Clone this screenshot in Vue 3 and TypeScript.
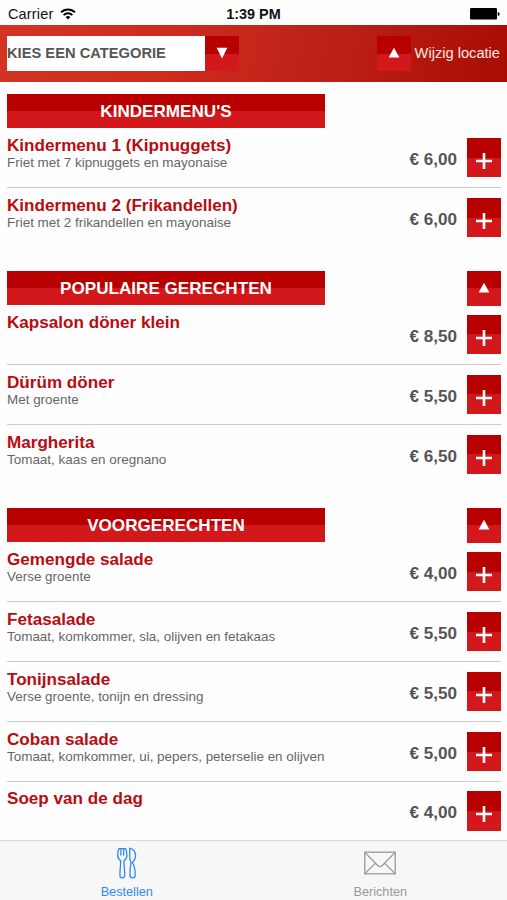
<script setup lang="ts">
interface Dish {
  name: string
  description: string
  price: string
}

interface Section {
  title: string
  collapsible: boolean
  dishes: Dish[]
}

const sections: Section[] = [
  {
    title: "KINDERMENU'S",
    collapsible: false,
    dishes: [
      { name: 'Kindermenu 1 (Kipnuggets)', description: 'Friet met 7 kipnuggets en mayonaise', price: '6,00' },
      { name: 'Kindermenu 2 (Frikandellen)', description: 'Friet met 2 frikandellen en mayonaise', price: '6,00' },
    ],
  },
  {
    title: 'POPULAIRE GERECHTEN',
    collapsible: true,
    dishes: [
      { name: 'Kapsalon döner klein', description: '', price: '8,50' },
      { name: 'Dürüm döner', description: 'Met groente', price: '5,50' },
      { name: 'Margherita', description: 'Tomaat, kaas en oregnano', price: '6,50' },
    ],
  },
  {
    title: 'VOORGERECHTEN',
    collapsible: true,
    dishes: [
      { name: 'Gemengde salade', description: 'Verse groente', price: '4,00' },
      { name: 'Fetasalade', description: 'Tomaat, komkommer, sla, olijven en fetakaas', price: '5,50' },
      { name: 'Tonijnsalade', description: 'Verse groente, tonijn en dressing', price: '5,50' },
      { name: 'Coban salade', description: 'Tomaat, komkommer, ui, pepers, peterselie en olijven', price: '5,00' },
      { name: 'Soep van de dag', description: '', price: '4,00' },
    ],
  },
]
</script>

<template>
  <div class="app">
    <div class="status">
      <div class="carrier">
        <span>Carrier</span>
        <svg class="wifi" width="16" height="12" viewBox="0 0 16 12" fill="none" stroke="#000" stroke-width="1.9">
          <path d="M1 4.4a10 10 0 0 1 14 0" />
          <path d="M3.6 7.1a6.3 6.3 0 0 1 8.8 0" />
          <path d="M8 11.6 5.6 9.1a3.5 3.5 0 0 1 4.8 0z" fill="#000" stroke="none" />
        </svg>
      </div>
      <div class="clock">1:39 PM</div>
      <div class="power">
        <svg width="30" height="12" viewBox="0 0 30 12">
          <rect x="0" y="0" width="27" height="11.5" rx="1.2" />
          <path d="M27.8 4v4c1.3-.4 1.8-1.1 1.8-2s-.5-1.6-1.8-2z" />
        </svg>
      </div>
    </div>

    <header class="toolbar">
      <div class="picker">
        <div class="field">KIES EEN CATEGORIE</div>
        <button class="square" aria-label="Open">
          <svg width="12" height="12" viewBox="0 0 12 12"><path d="M.6.8h10.8L6 11.6z" fill="#fff" /></svg>
        </button>
      </div>
      <div class="location">
        <button class="square" aria-label="Wijzig">
          <svg width="12" height="12" viewBox="0 0 12 12"><path d="M.6 10.6h10.8L6 .8z" fill="#fff" /></svg>
        </button>
        <span>Wijzig locatie</span>
      </div>
    </header>

    <main class="menu">
      <section v-for="section in sections" :key="section.title" class="section">
        <div class="section-head">
          <h2>{{ section.title }}</h2>
          <button v-if="section.collapsible" class="square" aria-label="Inklappen">
            <svg width="12" height="12" viewBox="0 0 12 12"><path d="M.6 10.6h10.8L6 .8z" fill="#fff" /></svg>
          </button>
        </div>
        <div v-for="dish in section.dishes" :key="dish.name" class="dish">
          <div class="info">
            <h3>{{ dish.name }}</h3>
            <p v-if="dish.description">{{ dish.description }}</p>
          </div>
          <div class="price">€ {{ dish.price }}</div>
          <button class="add" aria-label="Toevoegen">
            <svg width="16" height="16" viewBox="0 0 16 16"><path d="M8 0v16M0 8h16" stroke="#fff" stroke-width="2.6" /></svg>
          </button>
        </div>
      </section>
    </main>

    <nav class="tabs">
      <div class="tab active">
        <svg width="22" height="33" viewBox="0 0 22 33" fill="none" stroke="currentColor" stroke-width="1.3" stroke-linejoin="round" stroke-linecap="round">
          <path d="M3 1.6C2 3.500 1.700 6 1.700 8.500c0 3 1 4 2.900 5.100.3 4-.7 8.400-.7 14.400 0 1.800.9 2.900 2.400 2.900s2.400-1.100 2.400-2.900c0-6-1-10.400-.7-14.400 1.900-1.100 2.900-2.100 2.900-5.100 0-2.500-.3-5-1.300-6.900z" />
          <path d="M4.900 2v6M7.700 2v6" />
          <path d="M13.700 1.200c4 1 5.900 4.300 5.900 7.800 0 2.900-1.200 4.600-3.200 6.600 2 2.900 2.800 7.900 2.800 12.400 0 1.800-1 2.900-2.600 2.900s-2.700-1.100-2.700-2.900c0-4.500.2-8.500 1.200-12.400-1.200-2-1.400-4-1.400-6z" />
        </svg>
        <span>Bestellen</span>
      </div>
      <div class="tab">
        <svg width="32" height="33" viewBox="0 0 32 33" fill="none" stroke="currentColor" stroke-width="1.3">
          <rect x=".8" y="5.2" width="30.4" height="21.600" />
          <path d="M.8 5.4 14 18.800q2 1.700 4 0L31.200 5.400M.8 26.600l10.500-10.200M31.200 26.600 20.700 16.400" />
        </svg>
        <span>Berichten</span>
      </div>
    </nav>
  </div>
</template>

<style>
body {
  background: #fff;
}
</style>

<style scoped>
.app {
  display: flex;
  flex-direction: column;
  width: 507px;
  height: 900px;
  overflow: hidden;
  background: #fefefe;
  font-family: 'Liberation Sans', Arial, sans-serif;
}

.app * {
  box-sizing: border-box;
}

h2,
h3,
p {
  margin: 0;
}

button {
  display: flex;
  align-items: center;
  justify-content: center;
  padding: 0;
  border: 0;
}

.status {
  display: grid;
  grid-template-columns: 1fr auto 1fr;
  align-items: center;
  flex: none;
  height: 25px;
  padding: 2px 7px 0 8px;
  font-size: 14.5px;
  line-height: 20px;
  color: #111;
}

.carrier {
  display: flex;
  align-items: center;
  gap: 7px;
  letter-spacing: 0.15px;
}

.clock {
  margin-right: 1px;
  font-size: 14.4px;
  font-weight: 700;
}

.power {
  display: flex;
  justify-content: flex-end;
}

.toolbar {
  display: flex;
  justify-content: space-between;
  flex: none;
  height: 56.5px;
  padding: 11px 7px 0 7px;
  background: linear-gradient(100deg, #d33424 0%, #cc2b1e 35%, #bf2318 60%, #a80d04 100%);
}

.picker,
.location {
  display: flex;
  height: 34.5px;
}

.field {
  width: 198px;
  background: #fff;
  font-size: 14.7px;
  font-weight: 700;
  line-height: 35px;
  color: #555;
}

.square {
  width: 34px;
  height: 34.5px;
  background: linear-gradient(#b90000 50%, #d2181b 50%);
}

.location span {
  margin-left: 4px;
  font-size: 14.65px;
  line-height: 35px;
  color: #ffe9e4;
  white-space: nowrap;
}

.menu {
  flex: 1;
  min-height: 0;
  padding: 12.5px 6px 0 7px;
}

.section + .section {
  margin-top: 34.1px;
}

.section-head {
  display: flex;
  justify-content: space-between;
  height: 34.3px;
}

h2 {
  width: 318px;
  background: linear-gradient(#b90000 50%, #d2181b 50%);
  font-size: 17.1px;
  line-height: 35px;
  text-align: center;
  color: #fff;
}

.dish {
  display: flex;
  height: 59.8px;
  padding-top: 9.7px;
  border-bottom: 1px solid #ccc;
}

.dish:last-child {
  height: 49px;
  border-bottom: 0;
}

.info {
  flex: 1;
  min-width: 0;
}

h3 {
  margin-top: -1px;
  font-size: 17.1px;
  line-height: 18px;
  color: #b90c12;
  white-space: nowrap;
}

p {
  font-size: 13.45px;
  line-height: 15px;
  color: #666;
  white-space: nowrap;
}

.price {
  margin-right: 10px;
  font-size: 17.1px;
  font-weight: 700;
  line-height: 43px;
  color: #555;
}

.add {
  width: 34px;
  height: 39.3px;
  padding-top: 7px;
  background: linear-gradient(#b90000 50%, #d2181b 50%);
}

.tabs {
  display: flex;
  flex: none;
  height: 60px;
  border-top: 1px solid #d8d8d8;
  background: #f7f7f7;
}

.tab {
  display: flex;
  flex: 1;
  flex-direction: column;
  align-items: center;
  padding-top: 6px;
  font-size: 12.7px;
  line-height: 14px;
  color: #999;
}

.tab span {
  margin-top: 5px;
}

.tab.active {
  color: #2f8af0;
}
</style>
